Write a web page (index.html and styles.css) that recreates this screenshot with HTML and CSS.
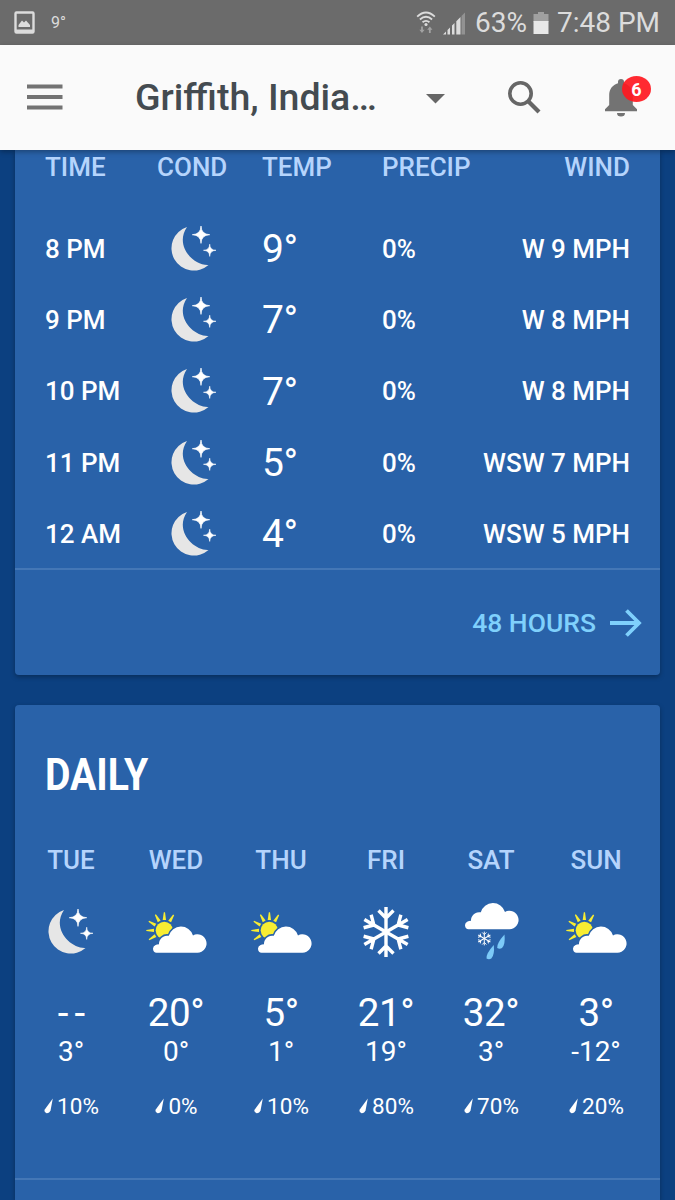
FILE: index.html
```html
<!DOCTYPE html>
<html lang="en">
<head>
    <meta charset="UTF-8">
    <meta name="viewport" content="width=device-width, initial-scale=1.0">
    <title>Weather</title>
    <link rel="stylesheet" href="styles.css">
</head>
<body>
    <!-- shared icons -->
    <svg class="defs" width="0" height="0">
        <symbol id="moon" viewBox="0 0 48 48">
            <path fill="#e6e6e6" d="M17 2A22.3 22.3 0 1 0 38.5 40C24 41 4 21 17 2z"/>
            <path fill="#fff" d="M31 1Q31.3 9.4 39.7 9.7Q31.3 10 31 18.4Q30.7 10 22.3 9.7Q30.7 9.4 31 1z" stroke="#fff" stroke-width=".7"/>
            <path fill="#fff" d="M39.7 19.2Q39.9 25.1 46 25.3Q39.9 25.5 39.7 31.4Q39.5 25.5 33.5 25.3Q39.5 25.1 39.7 19.2z" stroke="#fff" stroke-width=".6"/>
        </symbol>
        <symbol id="cloud" viewBox="0 0 62 46" overflow="visible">
            <path d="M11.5 43.7A4 4 0 0 1 10.6 36Q12.5 35.2 14 35.4A8.2 8.2 0 0 1 23.8 26.8A12.6 12.6 0 0 1 48 26.4A9.2 9.2 0 1 1 52.5 43.7z"/>
        </symbol>
        <symbol id="sun" viewBox="0 0 62 46">
            <g fill="#f8ed32">
                <circle cx="19.3" cy="21.3" r="8.6"/>
                <path id="ray" d="M17.7 11L18.8 3.3H20L21 11z"/>
                <use href="#ray" transform="rotate(31 19.3 21.3)"/>
                <use href="#ray" transform="rotate(-30 19.3 21.3)"/>
                <use href="#ray" transform="rotate(-60 19.3 21.3)"/>
                <use href="#ray" transform="rotate(-91 19.3 21.3)"/>
                <use href="#ray" transform="rotate(-122 19.3 21.3)"/>
            </g>
            <use href="#cloud" width="62" height="46" fill="#2962a9" stroke="#2962a9" stroke-width="3"/>
            <use href="#cloud" width="62" height="46" fill="#fff"/>
        </symbol>
        <symbol id="flake" viewBox="-26 -26 52 52">
            <g fill="none" stroke="#fff" stroke-width="3.4">
                <path id="arm" d="M0 0V-25M-7.5 -21.5L0 -14L7.5 -21.5"/>
                <use href="#arm" transform="rotate(60)"/>
                <use href="#arm" transform="rotate(120)"/>
                <use href="#arm" transform="rotate(180)"/>
                <use href="#arm" transform="rotate(240)"/>
                <use href="#arm" transform="rotate(300)"/>
            </g>
        </symbol>
        <symbol id="mix" viewBox="0 0 62 62">
            <use href="#cloud" x="-3" y="-15.5" width="62" height="46" fill="#fff"/>
            <use href="#flake" x="17" y="30.2" width="14.6" height="14.6"/>
            <g fill="#7ccaf8">
                <path d="M33.800 44Q34.800 54 31.300 57.500Q29 59 26.500 57.500Q26 52.500 33.800 44z"/>
                <path d="M44.500 33.500Q45.500 43.500 42 47Q39.700 48.500 37.200 47Q36.700 42 44.500 33.500z"/>
            </g>
        </symbol>
        <symbol id="drop" viewBox="0 0 9 16">
            <path fill="#fff" d="M8.800 .5L6.600 12.200Q5.400 15.300 2.600 15.200Q.2 14.600 .4 12z"/>
        </symbol>
    </svg>

    <div class="status-bar">
        <svg class="picture" width="22" height="24" viewBox="0 0 22 24">
            <rect x="1.5" y="1.5" width="18" height="20" rx="1" fill="none" stroke="#dcdcdc" stroke-width="2.4"/>
            <path fill="#dcdcdc" d="M2 18.5h17v3H2zM4.5 16V14L8 9.5L10 11.5L12 9.5L16 14V16z"/>
        </svg>
        <span class="status-temp">9°</span>
        <svg class="wifi" width="20" height="25" viewBox="0 0 22 26">
            <g fill="none" stroke="#dcdcdc" stroke-width="2">
                <path d="M1.3 6.5Q11 -2.5 20.7 6.5"/>
                <path d="M4.3 9.7Q11 3.7 17.7 9.7"/>
                <path d="M7.2 12.8Q11 9.6 14.8 12.8"/>
            </g>
            <circle cx="11" cy="15.2" r="1.7" fill="#dcdcdc"/>
            <path fill="#a2a2a2" d="M5.6 17.5h2v3.5h1.9l-2.9 3.5-2.9-3.5h1.9zM14.2 24.5v-3.5h-1.9l2.9-3.5 2.9 3.5h-1.9v3.5z"/>
        </svg>
        <svg class="signal" width="23" height="24" viewBox="0 0 23 24">
            <path fill="#dcdcdc" d="M0 23.5l3-3v3zM4.5 19l2.5-2.5v7H4.5zM9 14.5l2.5-2.5v11.5H9zM13.300 10.200l4.200-4.200v17.500h-4.200z"/>
            <path fill="#929292" d="M18.500 5l3.500-3.500v22h-3.500z"/>
        </svg>
        <span class="battery-text">63%</span>
        <svg class="battery" width="16" height="24" viewBox="0 0 16 24">
            <path fill="#a0a0a0" d="M5 1h6v2h4.5v8H.5V3H5z"/>
            <path fill="#e8e8e8" d="M.5 10h15v13H.5z"/>
        </svg>
        <span class="clock">7:48 PM</span>
    </div>

    <div class="toolbar">
        <svg class="menu" width="36" height="26" viewBox="0 0 36 26">
            <path fill="#737373" d="M0 .5h35.5v4H0zM0 11h35.5v4H0zM0 21.5h35.5v4H0z"/>
        </svg>
        <h1>Griffith, India…</h1>
        <svg class="caret" width="19" height="10" viewBox="0 0 19 10"><path fill="#666" d="M0 0h19l-9.5 9.5z"/></svg>
        <svg class="search" width="34" height="34" viewBox="0 0 34 34">
            <g fill="none" stroke="#666">
                <circle cx="13.5" cy="13.5" r="10.7" stroke-width="3.6"/>
                <path d="M21 21l11 11" stroke-width="4.2"/>
            </g>
        </svg>
        <div class="alerts">
            <svg width="32" height="38" viewBox="0 0 32 38">
                <path fill="#737373" d="M16 0a3 3 0 0 1 3 3v1.2C24.5 5.6 27.8 10.5 27.8 16v10L32 30.2v2H0v-2L4.2 26V16C4.2 10.5 7.5 5.6 13 4.2V3a3 3 0 0 1 3-3zM12 34h8a4 3.6 0 0 1-8 0z"/>
            </svg>
            <span class="badge">6</span>
        </div>
    </div>

    <div class="card hourly">
        <div class="hours-row head"><span>TIME</span><span>COND</span><span>TEMP</span><span>PRECIP</span><span class="wind">WIND</span></div>
        <div class="hours-row"><span>8 PM</span><svg class="cond"><use href="#moon"/></svg><span class="temp">9°</span><span>0%</span><span class="wind">W 9 MPH</span></div>
        <div class="hours-row"><span>9 PM</span><svg class="cond"><use href="#moon"/></svg><span class="temp">7°</span><span>0%</span><span class="wind">W 8 MPH</span></div>
        <div class="hours-row"><span>10 PM</span><svg class="cond"><use href="#moon"/></svg><span class="temp">7°</span><span>0%</span><span class="wind">W 8 MPH</span></div>
        <div class="hours-row"><span>11 PM</span><svg class="cond"><use href="#moon"/></svg><span class="temp">5°</span><span>0%</span><span class="wind">WSW 7 MPH</span></div>
        <div class="hours-row"><span>12 AM</span><svg class="cond"><use href="#moon"/></svg><span class="temp">4°</span><span>0%</span><span class="wind">WSW 5 MPH</span></div>
        <div class="card-footer">
            <span>48 HOURS</span>
            <svg width="32" height="28" viewBox="0 0 32 28"><path fill="none" stroke="#7fd0fc" stroke-width="3.8" d="M0 14h29M16.5 1.5L29 14L16.5 26.5"/></svg>
        </div>
    </div>

    <div class="card daily">
        <h2>DAILY</h2>
        <div class="days">
            <div class="day">
                <span class="name">TUE</span>
                <div class="icon"><svg width="48" height="48"><use href="#moon"/></svg></div>
                <span class="high none">--</span><span class="low">3°</span>
                <span class="rain"><svg width="9" height="16"><use href="#drop"/></svg>10%</span>
            </div>
            <div class="day">
                <span class="name">WED</span>
                <div class="icon"><svg width="62" height="46"><use href="#sun"/></svg></div>
                <span class="high">20°</span><span class="low">0°</span>
                <span class="rain"><svg width="9" height="16"><use href="#drop"/></svg>0%</span>
            </div>
            <div class="day">
                <span class="name">THU</span>
                <div class="icon"><svg width="62" height="46"><use href="#sun"/></svg></div>
                <span class="high">5°</span><span class="low">1°</span>
                <span class="rain"><svg width="9" height="16"><use href="#drop"/></svg>10%</span>
            </div>
            <div class="day">
                <span class="name">FRI</span>
                <div class="icon"><svg width="52" height="52"><use href="#flake"/></svg></div>
                <span class="high">21°</span><span class="low">19°</span>
                <span class="rain"><svg width="9" height="16"><use href="#drop"/></svg>80%</span>
            </div>
            <div class="day">
                <span class="name">SAT</span>
                <div class="icon"><svg width="62" height="62"><use href="#mix"/></svg></div>
                <span class="high">32°</span><span class="low">3°</span>
                <span class="rain"><svg width="9" height="16"><use href="#drop"/></svg>70%</span>
            </div>
            <div class="day">
                <span class="name">SUN</span>
                <div class="icon"><svg width="62" height="46"><use href="#sun"/></svg></div>
                <span class="high">3°</span><span class="low">-12°</span>
                <span class="rain"><svg width="9" height="16"><use href="#drop"/></svg>20%</span>
            </div>
        </div>
        <div class="card-footer"></div>
    </div>
</body>
</html>
```
FILE: styles.css
```css
* {
    box-sizing: border-box;
}
body {
    margin: 0;
    height: 1200px;
    overflow: hidden;
    font-family: Roboto, "Liberation Sans", sans-serif;
    background-color: #0c4080;
    color: #fff;
}
svg {
    display: block;
    flex-shrink: 0;
}
.defs {
    display: none;
}
.status-bar {
    display: flex;
    align-items: center;
    height: 45px;
    padding: 0 15px 0 14px;
    background-color: #6b6b6b;
    color: #dcdcdc;
    font-size: 28px;
    white-space: nowrap;
}
.status-temp {
    margin-left: 15px;
    font-size: 16px;
}
.wifi {
    margin-left: auto;
}
.signal {
    margin-left: 7px;
}
.battery-text {
    margin-left: 9px;
}
.battery {
    margin: 0 8px 0 6px;
}
.toolbar {
    position: relative;
    display: flex;
    align-items: center;
    height: 105px;
    padding: 0 0 2px 27px;
    background-color: #fafafa;
    box-shadow: 0 2px 5px rgba(0,0,0,0.3);
}
h1 {
    width: 243px;
    margin: 0 0 0 72px;
    font-size: 37.5px;
    font-weight: 500;
    color: #444b50;
    white-space: nowrap;
}
.caret {
    margin: 4px 0 0 48px;
}
.search {
    margin-left: 62px;
}
.alerts {
    position: relative;
    margin: 3px 0 0 64px;
}
.badge {
    position: absolute;
    left: 17px;
    top: -3px;
    width: 29px;
    height: 26px;
    border-radius: 50%;
    background-color: rgba(255,24,32,0.92);
    font-size: 18px;
    font-weight: bold;
    line-height: 27px;
    text-align: center;
}
.card {
    width: 645px;
    margin-left: 15px;
    border-radius: 4px;
    background-color: #2962a9;
    box-shadow: 0 2px 5px rgba(0,0,0,0.3);
}
.hourly {
    height: 525px;
    border-radius: 0 0 4px 4px;
}
.hours-row {
    display: grid;
    grid-template-columns: 112px 105px 120px 84px 1fr;
    align-items: center;
    height: 71.3px;
    padding: 2px 30px 0;
    font-size: 26px;
    font-weight: 500;
    white-space: nowrap;
}
.hours-row.head {
    height: 62px;
    padding: 0 30px 28px;
    color: #b5d4fc;
}
.cond {
    width: 48px;
    height: 48px;
    margin-left: 13px;
}
.temp {
    padding-top: 1px;
    font-size: 39px;
    font-weight: 400;
    letter-spacing: -0.5px;
}
.wind {
    text-align: right;
}
.card-footer {
    display: flex;
    align-items: center;
    justify-content: flex-end;
    gap: 14px;
    height: 106.5px;
    padding-right: 18px;
    border-top: 2px solid #4477b6;
    font-size: 26.5px;
    font-weight: 500;
    color: #7fd0fc;
}
.daily {
    height: 495px;
    margin-top: 30px;
    padding-top: 43px;
    border-radius: 4px 4px 0 0;
    overflow: hidden;
}
h2 {
    margin: 0 0 0 30px;
    font-size: 45px;
    line-height: 53px;
    transform: scaleX(0.87);
    transform-origin: left;
}
.days {
    display: grid;
    grid-template-columns: repeat(6, 105px);
    margin-left: 3.5px;
    height: 377px;
    padding-top: 44px;
}
.day {
    display: flex;
    flex-direction: column;
    align-items: center;
}
.name {
    font-size: 26px;
    font-weight: 500;
    line-height: 30px;
    color: #b5d4fc;
}
.icon {
    display: flex;
    align-items: center;
    height: 62px;
    margin: 25.5px 0 27.5px;
}
.high {
    font-size: 38.5px;
    line-height: 46px;
    letter-spacing: -0.4px;
}
.high.none {
    padding-left: 7px;
    letter-spacing: 6px;
}
.low {
    font-size: 28px;
    line-height: 32px;
}
.rain {
    display: flex;
    align-items: center;
    gap: 4px;
    margin: 24px 0 0 1px;
    font-size: 22.5px;
    line-height: 28px;
}
```
